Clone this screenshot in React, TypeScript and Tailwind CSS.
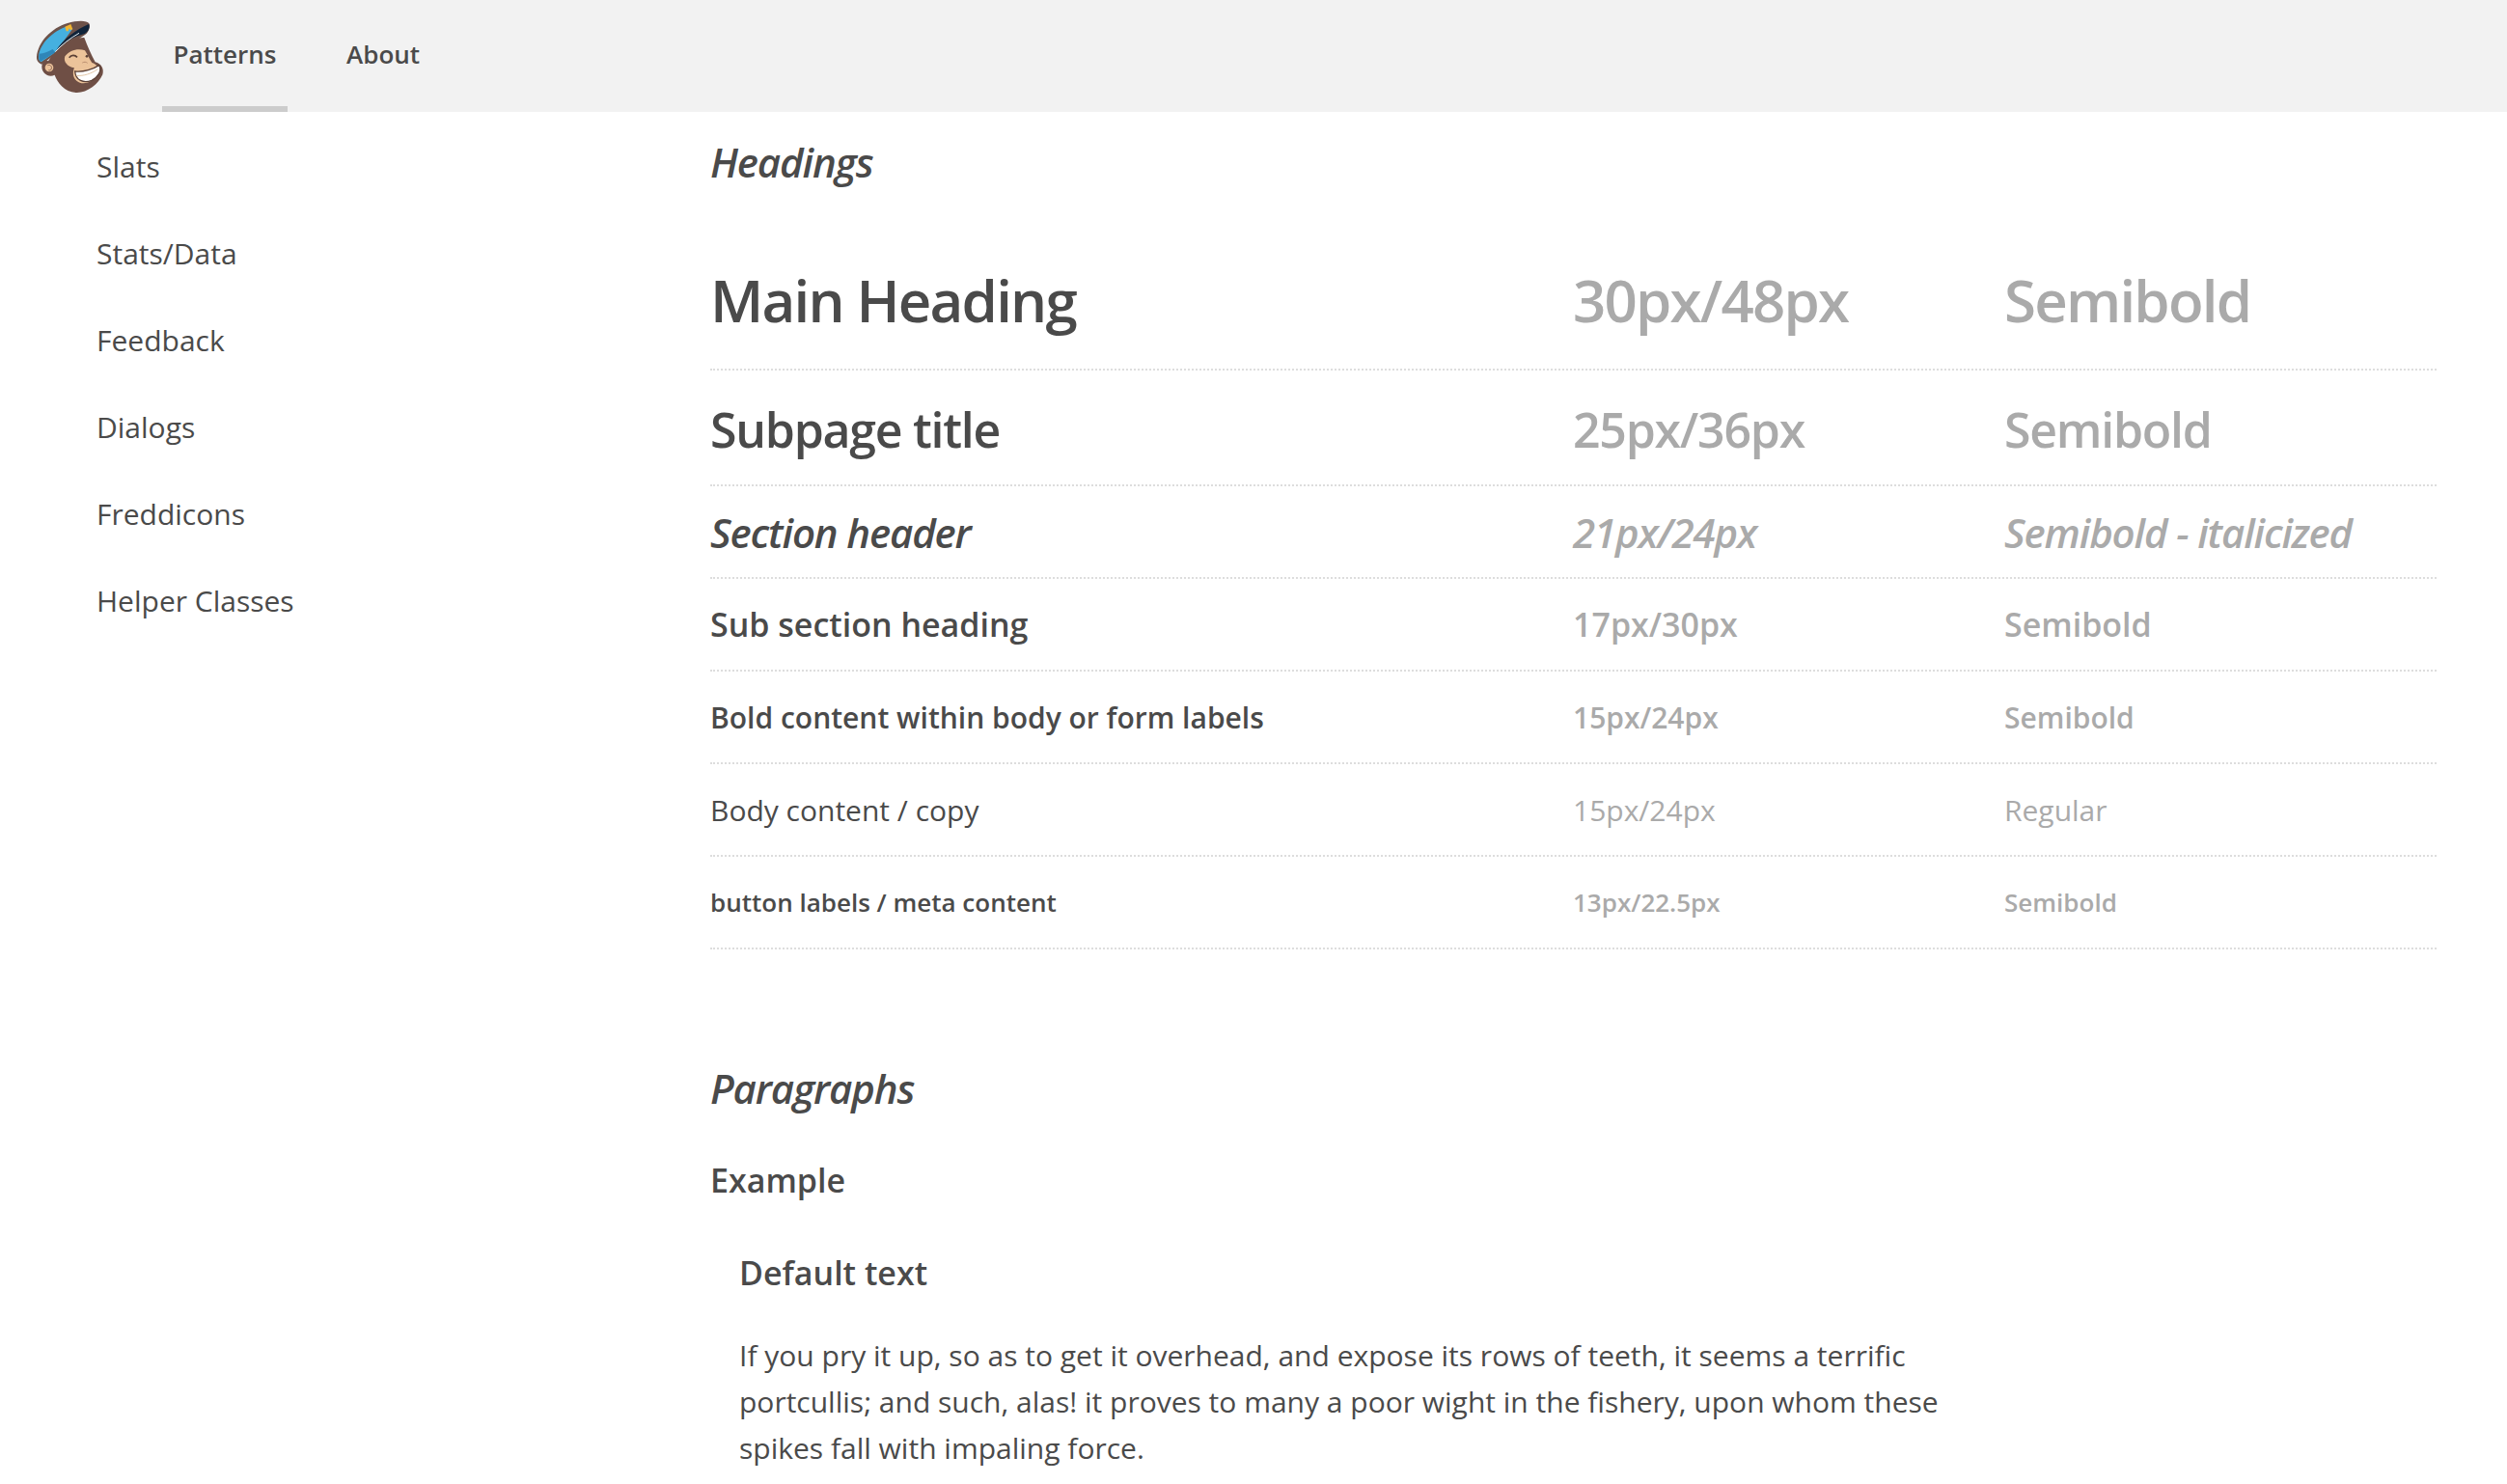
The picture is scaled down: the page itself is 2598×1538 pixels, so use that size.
const sideLinks = ["Slats", "Stats/Data", "Feedback", "Dialogs", "Freddicons", "Helper Classes"];

const rows = [
  { name: "Main Heading", size: "30px/48px", weight: "Semibold", rowCls: "h-[121px] items-start", textCls: "text-[60px] leading-[96px] font-semibold tracking-[-1.8px]" },
  { name: "Subpage title", size: "25px/36px", weight: "Semibold", rowCls: "h-[120px] items-center pt-[4px]", textCls: "text-[50px] leading-[72px] font-semibold tracking-[-1.25px]" },
  { name: "Section header", size: "21px/24px", weight: "Semibold - italicized", rowCls: "h-[96px] items-center pt-[1px]", textCls: "text-[42px] leading-[48px] font-semibold italic tracking-[-1.15px]" },
  { name: "Sub section heading", size: "17px/30px", weight: "Semibold", rowCls: "h-[96px] items-center", textCls: "text-[34px] leading-[60px] font-semibold" },
  { name: "Bold content within body or form labels", size: "15px/24px", weight: "Semibold", rowCls: "h-[96px] items-center pt-[2px]", textCls: "text-[30px] leading-[48px] font-semibold" },
  { name: "Body content / copy", size: "15px/24px", weight: "Regular", rowCls: "h-[96px] items-center pt-[2px]", textCls: "text-[30px] leading-[48px] font-normal" },
  { name: "button labels / meta content", size: "13px/22.5px", weight: "Semibold", rowCls: "h-[96px] items-center pt-[1px]", textCls: "text-[26px] leading-[45px] font-semibold" },
];

function Logo() {
  return (
    <svg viewBox="0 0 255 255" className="h-[85px] w-[85px] shrink-0">
      {/* hat */}
      <path d="M24 132C28 85 70 42 120 27c30-8 58-10 68 2 3 14-5 30-17 36L84 122 40 155c-10-3-17-12-16-23z" fill="#6d5249" />
      <path d="M30 131C33 92 72 52 122 36l14 8-54 74-44 30c-6-4-9-10-8-17z" fill="#45b0e0" />
      <path d="M32 122c14-1 28-6 42-14l8 10-46 28c-5-5-6-14-4-24z" fill="#2f86b8" />
      {/* head */}
      <path d="M60 145C85 105 135 70 172 72c10 28 22 53 34 76 20 5 28 22 23 39-13 30-49 58-83 56-36-3-58-31-66-55-18 10-40-5-40-25 0-13 10-21 20-18z" fill="#6f4f45" />
      <circle cx="63" cy="165" r="13" fill="#ecc39a" />
      <path d="M58 158c8-3 14 3 12 10-1 5-6 7-9 5" fill="none" stroke="#8f6a58" strokeWidth="3" />
      {/* face */}
      <path d="M112 130c15-20 42-26 62-18 8 12 14 28 22 38 17 6 27 20 23 30-13 25-48 45-70 27-14-11-13-30-8-41-22-3-35-20-29-36z" fill="#ecc39a" />
      <path d="M143 177c27 3 57-7 75-19 10 17-3 37-23 47-25 10-50 0-52-28z" fill="#fff" stroke="#5b4036" strokeWidth="4" />
      <path d="M148 190c22 2 46-6 66-20" fill="none" stroke="#e3c7a8" strokeWidth="3" />
      <path d="M125 134c7-9 18-9 25-1" fill="none" stroke="#5b4036" strokeWidth="5" />
      <circle cx="180" cy="130" r="4" fill="#5b4036" />
      <path d="M166 150c5-3 12-3 16 1" fill="none" stroke="#b98d6f" strokeWidth="3" />
      {/* visor */}
      <path d="M84 112c25-38 64-66 102-82 5 10-1 23-13 30-32 8-63 25-89 52z" fill="#10243a" />
      <path d="M82 116c22-24 46-42 74-58" fill="none" stroke="#e6eef2" strokeWidth="3" />
      <path d="M112 38l18-8 6 16-7 3-4-6-3 9-6 0z" fill="#f2b632" />
    </svg>
  );
}

export default function App() {
  return (
    <div className="h-[1538px] overflow-hidden bg-white font-['Open_Sans',sans-serif] text-[#4a4a4a] antialiased">
      <header className="flex h-[116px] bg-[#f2f2f2] pl-[30px] pt-[15px]">
        <Logo />
        <nav className="-mt-[15px] ml-[53px] flex text-[26px] font-semibold">
          <div className="flex h-full w-[130px] items-center justify-center border-b-[6px] border-[#ccc] pt-[3px]">Patterns</div>
          <div className="ml-[60px] flex h-full items-center pb-[3px] pl-[1px]">About</div>
        </nav>
      </header>

      <div className="flex">
        <aside className="w-[736px] shrink-0 pl-[100px] pt-[33px]">
          {sideLinks.map((link) => (
            <div key={link} className="h-[90px] text-[30px] leading-[48px]">
              {link}
            </div>
          ))}
        </aside>

        <main className="w-[1789px]">
          <h2 className="pt-[28px] text-[42px] leading-[48px] font-semibold italic tracking-[-1.15px]">Headings</h2>

          <div className="mt-[71px]">
            {rows.map((row) => (
              <div key={row.name} className={`flex border-b-2 border-dotted border-[#ddd] ${row.rowCls} ${row.textCls}`}>
                <div className="w-[894px] shrink-0">{row.name}</div>
                <div className="w-[447px] shrink-0 text-[#aaa]">{row.size}</div>
                <div className="text-[#aaa]">{row.weight}</div>
              </div>
            ))}
          </div>

          <h2 className="mt-[120px] text-[42px] leading-[48px] font-semibold italic tracking-[-1.15px]">Paragraphs</h2>
          <h4 className="mt-[41px] text-[34px] leading-[60px] font-semibold">Example</h4>
          <div className="pl-[30px]">
            <h4 className="mt-[36px] text-[34px] leading-[60px] font-semibold">Default text</h4>
            <p className="mt-[32px] w-[1260px] text-[30px] leading-[48px]">
              If you pry it up, so as to get it overhead, and expose its rows of teeth, it seems a terrific portcullis; and such, alas! it proves to many a poor wight in the fishery, upon whom these spikes fall with impaling force.
            </p>
          </div>
        </main>
      </div>
    </div>
  );
}
